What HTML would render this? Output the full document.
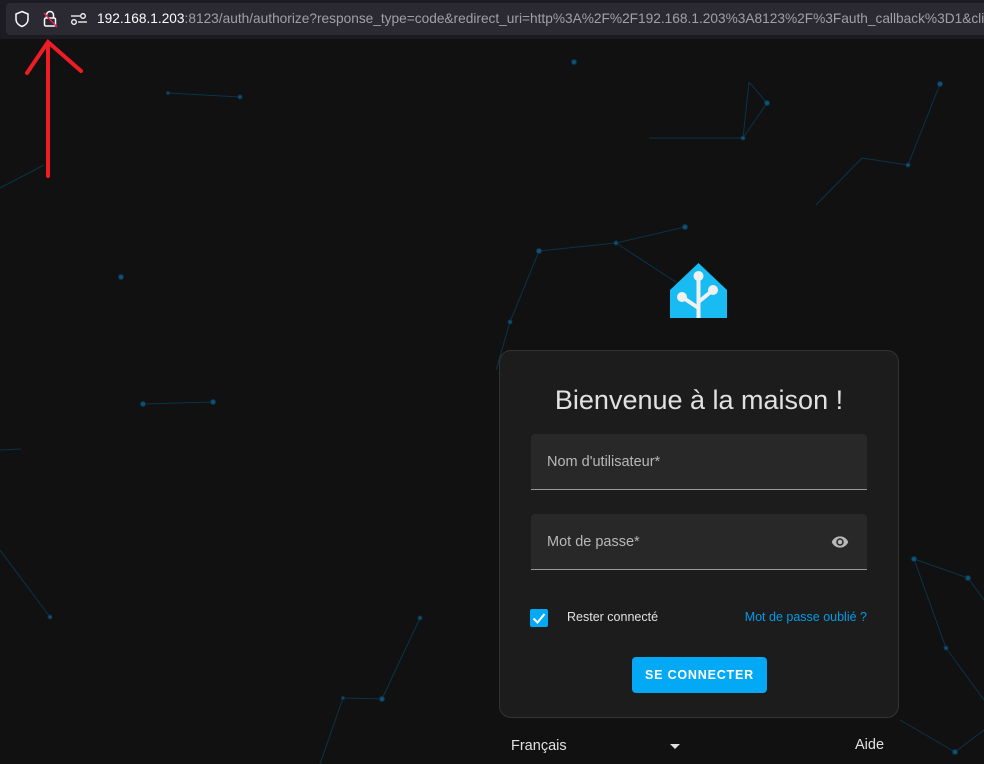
<!DOCTYPE html>
<html><head><meta charset="utf-8"><style>
*{margin:0;padding:0;box-sizing:border-box}
body{width:984px;height:764px;background:#111111;font-family:"Liberation Sans",sans-serif;position:relative;overflow:hidden;color:#e1e1e1}
.bar{position:absolute;left:0;top:0;width:984px;height:39px;background:#1c1b22}
.url{position:absolute;left:6px;top:3px;width:990px;height:32px;background:#2b2a33;border-radius:4px}
.urltext{position:absolute;left:97px;top:11px;font-size:13.7px;color:#fbfbfe;white-space:nowrap}
.urltext span{color:#a0a0a6}
.card{position:absolute;left:499px;top:350px;width:400px;height:368px;background:#1c1c1c;border:1px solid #333;border-radius:12px}
h1{position:absolute;left:0;width:100%;top:34px;text-align:center;font-weight:normal;font-size:27px;color:#e1e1e1}
.field{position:absolute;left:31px;width:336px;height:56px;background:#282828;border-radius:4px 4px 0 0;border-bottom:1px solid #9a9a9a}
.field span{position:absolute;left:16px;top:20px;font-size:14.5px;color:#b8b8b8}
.chk{position:absolute;left:30px;top:258px;width:18px;height:18px;background:#03a9f4;border-radius:2px}
.btn{position:absolute;left:132px;top:306px;width:135px;height:36px;background:#03a9f4;border-radius:4px;color:#fff;font-weight:bold;font-size:12.5px;letter-spacing:0.8px;text-align:center;line-height:36px}
</style></head><body>
<svg style="position:absolute;left:0;top:0" width="984" height="764" stroke="#0b3349" stroke-width="1" fill="#0e5275">
<line x1="168" y1="93" x2="240" y2="97"/><circle cx="168" cy="93" r="1.5"/><circle cx="240" cy="97" r="2"/>
<line x1="0" y1="188" x2="44" y2="165"/>
<line x1="143" y1="404" x2="213" y2="402"/><circle cx="143" cy="404" r="2.5"/><circle cx="213" cy="402" r="2.5"/>
<line x1="0" y1="450" x2="21" y2="449"/><circle cx="121" cy="277" r="2.5"/><circle cx="574" cy="62" r="2.5"/>
<line x1="0" y1="550" x2="50" y2="617"/><circle cx="50" cy="617" r="2"/>
<line x1="539" y1="251" x2="616" y2="243"/><line x1="616" y1="243" x2="685" y2="227"/><line x1="616" y1="243" x2="685" y2="288"/>
<line x1="539" y1="251" x2="510" y2="322"/><line x1="510" y1="322" x2="496" y2="370"/>
<circle cx="539" cy="251" r="2.5"/><circle cx="616" cy="243" r="2"/><circle cx="685" cy="227" r="2.5"/><circle cx="510" cy="322" r="2"/>
<line x1="749" y1="82" x2="767" y2="103"/><line x1="767" y1="103" x2="743" y2="138"/><line x1="749" y1="82" x2="743" y2="138"/><line x1="649" y1="138" x2="743" y2="138"/>
<circle cx="767" cy="103" r="2.5"/><circle cx="743" cy="138" r="2"/>
<line x1="940" y1="84" x2="908" y2="165"/><line x1="908" y1="165" x2="862" y2="158"/><line x1="862" y1="158" x2="816" y2="205"/>
<circle cx="940" cy="84" r="2.5"/><circle cx="908" cy="165" r="2"/>
<line x1="914" y1="559" x2="968" y2="578"/><line x1="914" y1="559" x2="946" y2="648"/><line x1="946" y1="648" x2="984" y2="700"/><line x1="968" y1="578" x2="984" y2="600"/>
<line x1="900" y1="720" x2="955" y2="752"/><line x1="955" y1="752" x2="984" y2="730"/>
<circle cx="914" cy="559" r="2.5"/><circle cx="968" cy="578" r="2.5"/><circle cx="946" cy="648" r="2"/><circle cx="955" cy="752" r="2.5"/>
<line x1="343" y1="698" x2="382" y2="699"/><line x1="382" y1="699" x2="420" y2="618"/><line x1="343" y1="698" x2="320" y2="764"/>
<circle cx="382" cy="699" r="2.5"/><circle cx="343" cy="698" r="1.5"/><circle cx="420" cy="618" r="2"/>
</svg>
<div class="bar"><div class="url"></div>
<svg style="position:absolute;left:14px;top:10px" width="16" height="18" fill="none" stroke="#fbfbfe" stroke-width="1.5"><path d="M8 1.5 L14 4 V9 C14 13 11 15.5 8 16.5 C5 15.5 2 13 2 9 V4 Z"/></svg>
<svg style="position:absolute;left:42px;top:10px" width="16" height="18" fill="none" stroke="#fbfbfe" stroke-width="1.5"><path d="M4.5 8 V5 a3.5 3.5 0 0 1 7 0 V8"/><rect x="2.5" y="8" width="11" height="8" rx="1.5"/><line x1="2" y1="3" x2="15" y2="17" stroke="#e22850"/></svg>
<svg style="position:absolute;left:70px;top:12px" width="18" height="14" fill="none" stroke="#fbfbfe" stroke-width="1.3"><line x1="1" y1="4" x2="10" y2="4"/><circle cx="13" cy="4" r="2.3"/><line x1="8" y1="10" x2="17" y2="10"/><circle cx="4" cy="10" r="2.3"/></svg>
<div class="urltext">192.168.1.203<span>:8123/auth/authorize?response_type=code&amp;redirect_uri=http%3A%2F%2F192.168.1.203%3A8123%2F%3Fauth_callback%3D1&amp;cli</span></div>
</div>
<svg style="position:absolute;left:20px;top:38px" width="70" height="145" fill="none" stroke="#ee1c25" stroke-width="4" stroke-linecap="round"><path d="M28 138 L28 6 M7 35 L28 4 L61 33"/></svg>
<svg style="position:absolute;left:670px;top:262px" width="58" height="56"><path d="M0 28 L0 56 L57 56 L57 28 L28.5 1 Z" fill="#18bcf2"/>
<g stroke="#f0f0f0" stroke-width="4" fill="#f0f0f0"><line x1="28.5" y1="16" x2="28.5" y2="56"/><line x1="28.5" y1="46" x2="12" y2="35"/><line x1="28.5" y1="40" x2="43" y2="28"/></g>
<circle cx="28.5" cy="14" r="5" fill="#f0f0f0"/><circle cx="12" cy="35" r="5" fill="#f0f0f0"/><circle cx="43" cy="28" r="5" fill="#f0f0f0"/></svg>
<div class="card">
<h1>Bienvenue à la maison !</h1>
<div class="field" style="top:83px"><span>Nom d'utilisateur*</span></div>
<div class="field" style="top:163px"><span>Mot de passe*</span>
<svg style="position:absolute;left:298px;top:19px" width="22" height="18" viewBox="0 0 24 24" fill="#b8b8b8"><path d="M12 4.5C7 4.5 2.7 7.6 1 12c1.7 4.4 6 7.5 11 7.5s9.3-3.1 11-7.5c-1.7-4.4-6-7.5-11-7.5zM12 17a5 5 0 1 1 0-10 5 5 0 0 1 0 10zm0-8a3 3 0 1 0 0 6 3 3 0 0 0 0-6z"/></svg></div>
<div class="chk"><svg width="18" height="18"><path d="M3.5 9.5 L7.5 13.5 L14.5 5" stroke="#fff" stroke-width="2" fill="none"/></svg></div>
<div style="position:absolute;left:67px;top:259px;font-size:12.5px;color:#e1e1e1">Rester connecté</div>
<div style="position:absolute;right:31px;top:259px;font-size:12.5px;color:#039be5">Mot de passe oublié ?</div>
<div class="btn">SE CONNECTER</div>
</div>
<div style="position:absolute;left:511px;top:738px;font-size:14.5px;color:#e1e1e1">Français</div>
<div style="position:absolute;left:670px;top:744px;width:0;height:0;border-left:5px solid transparent;border-right:5px solid transparent;border-top:5px solid #e1e1e1"></div>
<div style="position:absolute;left:855px;top:737px;font-size:14.5px;color:#e1e1e1">Aide</div>
</body></html>
